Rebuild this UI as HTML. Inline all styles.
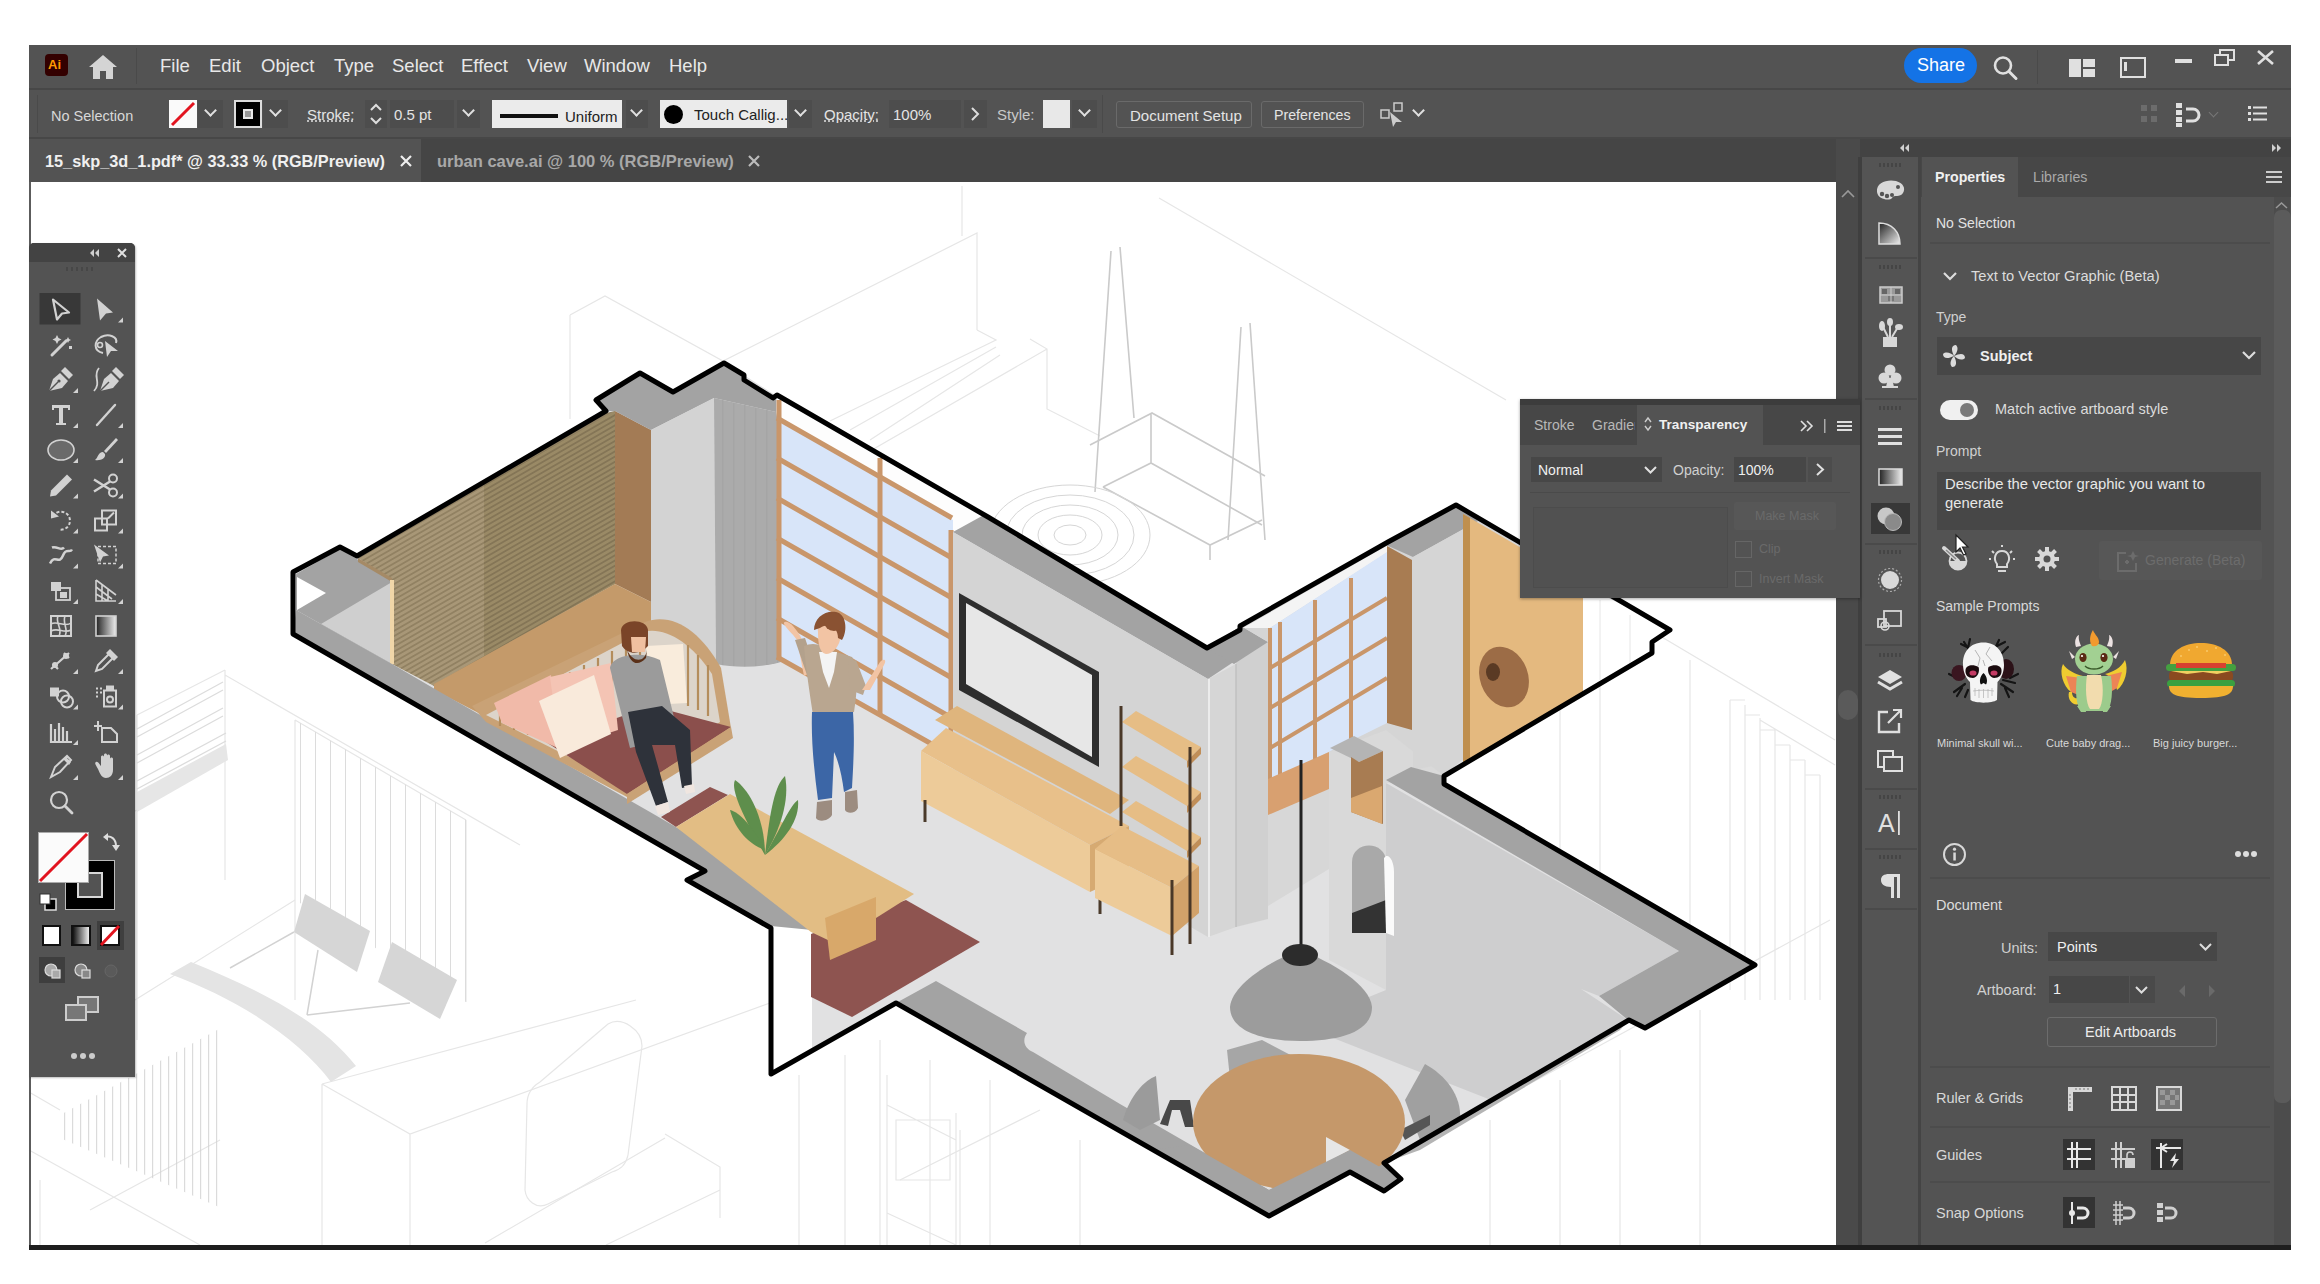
<!DOCTYPE html>
<html><head><meta charset="utf-8">
<style>
*{margin:0;padding:0;box-sizing:border-box}
html,body{width:2320px;height:1284px;overflow:hidden;background:#fff;font-family:"Liberation Sans",sans-serif}
.a{position:absolute}
.t{position:absolute;white-space:nowrap;color:#e6e6e6;line-height:1}
.m{font-size:18.5px;top:57px;color:#e8e8e8}
.c{font-size:15px;top:107px;color:#e4e4e4}
.dd{position:absolute;background:#4d4d4d}
.chev{position:absolute;width:9px;height:9px;border-right:2px solid #e0e0e0;border-bottom:2px solid #e0e0e0;transform:rotate(45deg)}
.btn{position:absolute;border:1px solid #6a6a6a;border-radius:3px;background:#535353}
svg{position:absolute;overflow:visible}
#frame{left:29px;top:45px;width:2262px;height:1205px;background:#535353}
#menubar{left:29px;top:45px;width:2262px;height:45px;background:#535353;border-bottom:2px solid #474747}
#ctrlbar{left:29px;top:90px;width:2262px;height:49px;background:#535353;border-bottom:2px solid #474747}
#tabbar{left:29px;top:139px;width:1807px;height:43px;background:#454545}
#canvas{left:29px;top:182px;width:1807px;height:1063px;background:#fff;overflow:hidden}
#vscroll{left:1836px;top:139px;width:24px;height:1106px;background:#4a4a4a}
#bottombar{left:29px;top:1245px;width:2262px;height:5px;background:#1e1e1e}
</style></head><body>
<div id="frame" class="a"></div>
<div id="menubar" class="a"></div>
<div id="ctrlbar" class="a"></div>
<div id="tabbar" class="a"></div>
<div id="canvas" class="a"></div>
<svg class="a" style="left:29px;top:182px" width="1807" height="1063" viewBox="29 182 1807 1063">
<defs>
<pattern id="slat" width="5" height="4.5" patternUnits="userSpaceOnUse" patternTransform="rotate(-30)"><rect width="5" height="4.5" fill="#a89777"/><rect y="0" width="5" height="1.8" fill="#918162"/></pattern>
<pattern id="slat2" width="5" height="4.5" patternUnits="userSpaceOnUse" patternTransform="rotate(-30)"><rect width="5" height="4.5" fill="#9a8a66"/><rect y="0" width="5" height="1.8" fill="#847556"/></pattern>
<pattern id="curt" width="11" height="10" patternUnits="userSpaceOnUse"><rect width="11" height="10" fill="#ababab"/><rect x="7" width="1.5" height="10" fill="#a5a5a5"/></pattern>
<pattern id="vsl" width="15" height="10" patternUnits="userSpaceOnUse"><rect x="0" width="1" height="10" fill="#dcdcdc"/></pattern>
<pattern id="vsl2" width="8" height="10" patternUnits="userSpaceOnUse"><rect x="0" width="1.2" height="10" fill="#d2d2d2"/></pattern>
</defs>
<!-- ===== background faint sketch ===== -->
<g fill="none" stroke="#e6e6e6" stroke-width="1.2">
<path d="M570 315 L605 296 L723 361 L977 233 V330 M570 315 V419 M962 186 V236"/>
<path d="M977 330 L996 340 L830 421 M996 347 L850 430 M1000 355 L870 440 M1030 339 L1047 349 V409 L1100 436 M1047 349 L851 462"/>
<path d="M1159 198 L1506 400"/>
<path d="M1560 680 V900 M1600 660 V880 M1650 630 L1835 740 M1690 660 V950 M1760 720 L1835 765 M1730 700 V990 M1745 705 V1000 M1760 718 V1000 M1775 730 V1000 M1790 745 V1000 M1805 760 V1000 M1820 775 V1000 M1730 700 H1745 M1745 715 H1760 M1760 730 H1775 M1775 745 H1790 M1790 760 H1805 M1805 775 H1820"/>
<path d="M137 715 L225 670 M137 715 V1040 M225 670 V880 M225 675 L520 845 M295 720 V1000 M466 820 V1002 M295 720 L466 820"/>
<path d="M40 860 L137 810 M135 1000 L295 900 M29 1092 L60 1110 M322 1084 L410 1134 L778 1000 M322 1084 L636 1000 M410 1134 V1245 M322 1084 V1245 M665 1134 L720 1167 V1218 M485 1243 L665 1138 M606 1245 L720 1190 M799 1075 V1245 M845 1055 V1245 M887 1075 V1245 M956 1113 V1245 M887 1105 L956 1140 M887 1213 L956 1245 M896 1120 H950 V1180 H896 Z"/>
<path d="M527 1104 C527 1095 530 1088 540 1082 L608 1024 C622 1016 642 1030 642 1046 L628 1155 C626 1165 620 1170 612 1172 L548 1204 C536 1210 526 1200 525 1190 Z"/>
<path d="M29 1150 L200 1245 M40 1180 V1245 M90 1210 L220 1140"/>
<path d="M880 1040 V1245 M930 1060 V1245 M990 1080 V1245 M900 1180 L1040 1110 M1080 1140 V1245 M960 1130 V1245"/>
<path d="M1500 1100 L1830 920 M1490 1120 V1245 M1560 1080 V1245 M1620 1050 V1245 M1700 1010 V1245"/>
</g>
<g fill="none" stroke="#dcdcdc" stroke-width="1.3"><path d="M137 729 L223 682 M137 737 L223 690 M137 755 L223 708 M137 763 L223 716 M137 781 L226 733 M137 789 L226 741"/></g>
<path d="M137 792 L226 744 L228 760 L137 812 Z" fill="#e6e6e6"/>
<path d="M295 720 L466 820 V1002 L295 900 Z" fill="url(#vsl)"/>
<path d="M60 1115 L219 1029 L219 1207 L60 1138 Z" fill="url(#vsl2)" opacity="0.8"/>
<g fill="none" stroke="#cacaca" stroke-width="1.6">
<path d="M1111 251 L1095 492 M1120 247 L1134 418 M1241 327 L1228 540 M1250 323 L1265 540"/>
<path d="M1090 445 L1152 413 L1265 476 M1103 487 L1151 463 L1262 525 M1151 413 V463"/>
<path d="M1103 487 L1210 545 L1262 520 M1210 545 V560"/>
</g>
<g fill="none" stroke="#d6d6d6" stroke-width="1"><ellipse cx="1070" cy="535" rx="80" ry="50"/><ellipse cx="1070" cy="535" rx="64" ry="40"/><ellipse cx="1070" cy="535" rx="48" ry="30"/><ellipse cx="1070" cy="535" rx="32" ry="20"/><ellipse cx="1070" cy="535" rx="16" ry="10"/></g>
<!-- bed -->
<path d="M170 974 L191 962 C260 990 320 1020 356 1066 L331 1082 C300 1040 240 1000 170 974 Z" fill="#e4e4e4"/>
<g fill="#d6d6d6"><path d="M305 894 L370 931 L357 972 L294 932 Z"/><path d="M392 942 L457 980 L440 1019 L378 982 Z"/></g>
<g fill="none" stroke="#d2d2d2" stroke-width="1.5"><path d="M230 968 L294 932 M307 1015 L318 950 M307 1015 L410 1003"/></g>
<!-- ===== main floor plan ===== -->
<path d="M293 572 L340 547 L357 556 L606 411 L596 400 L640 373 L673 392 L724 363 L744 375 L775 395 L988 517 L1207 648 L1241 626 L1388 542 L1456 505 L1670 630 L1652 642 L1652 653 L1444 776 L1444 784 L1755 965 L1645 1028 L1629 1020 L1384 1163 L1401 1179 L1384 1191 L1350 1172 L1269 1216 L896 1003 L771 1074 L771 928 L687 880 L705 871 L293 634 Z" fill="#e1e1e2"/>
<!-- left end -->
<path d="M296 574 L340 549 L392 580 L392 664 L296 610 Z" fill="#a3a3a3"/>
<path d="M297 577 L326 593 L297 610 Z" fill="#fff"/>
<path d="M321 624 L392 582 L392 664 Z" fill="#cfcfcf"/>
<!-- slat wall -->
<path d="M358 558 L606 413 L615 411 L615 584 L434 686 L392 664 L392 580 Z" fill="url(#slat)"/>
<path d="M484 485 L615 411 L615 584 L484 656 Z" fill="url(#slat2)"/>
<path d="M358 558 L392 578 L392 582 L358 562 Z" fill="#a58a66"/>
<path d="M390 580 L394 580 L394 664 L390 664 Z" fill="#f0d6a8"/>
<!-- brown side of alcove -->
<path d="M615 411 L651 430 L651 602 L615 584 Z" fill="#a37b55"/>
<!-- bench -->
<path d="M434 684 L615 584 L651 602 L651 640 L500 724 L434 690 Z" fill="#c49a6a"/>
<!-- grey strip left room bottom -->
<path d="M296 610 L392 664 L440 692 L650 812 L705 844 L811 908 L811 932 L771 928 L687 880 L705 871 L293 634 Z" fill="#a3a3a3"/>
<!-- pillar cap -->
<path d="M606 411 L596 400 L640 373 L673 392 L724 363 L744 375 L744 380 L776 396 L776 412 L714 398 L651 430 L615 411 Z" fill="#a3a3a3"/>
<path d="M651 430 L714 398 L716 664 L651 632 Z" fill="#d3d3d3"/>
<path d="M714 398 L776 412 L780 432 L781 662 C760 668 735 668 716 664 Z" fill="url(#curt)"/>
<!-- window wall left -->
<path d="M777 400 L988 517 L953 534 L953 755 L777 658 Z" fill="#d8e5f9"/>
<path d="M777 398 L988 516 L953 532 L953 520 L777 420 Z" fill="#fdfdfd"/>
<g fill="none" stroke="#c9966a" stroke-width="5">
<path d="M779 400 V660 M880 458 V714 M951 530 V755"/>
<path d="M777 418 L952 518 M777 458 L952 558 M777 498 L952 598 M777 538 L952 638 M777 578 L952 678 M777 618 L952 718 M777 657 L953 756"/>
</g>
<!-- TV wall -->
<path d="M953 532 L982 516 L1207 648 L1241 626 L1241 657 L1208 679 Z" fill="#a3a3a3"/>
<path d="M953 532 L1208 679 L1208 937 L953 790 Z" fill="#d4d4d4"/>
<path d="M1208 679 L1236 664 L1236 927 L1208 937 Z" fill="#d6d6d6"/>
<path d="M1209 679 V937" stroke="#ececec" stroke-width="2"/>
<path d="M1236 644 L1268 640 L1268 919 L1236 927 Z" fill="#d0d0d0"/>
<path d="M1236 664 V927" stroke="#c0c0c0" stroke-width="1.5"/>
<!-- TV -->
<path d="M959 593 L1099 672 L1099 767 L959 690 Z" fill="#2e2e2e"/>
<path d="M966 603 L1092 675 L1092 757 L966 684 Z" fill="#e7e7e7"/>
<!-- sideboard -->
<path d="M935 720 L957 706 L1129 800 L1110 814 Z" fill="#dfb57d"/>
<path d="M921 751 L946 728 L1129 826 L1090 845 Z" fill="#e8c08a"/>
<path d="M921 751 L1090 845 L1090 892 L921 801 Z" fill="#edcb99"/>
<path d="M1090 845 L1129 826 L1129 874 L1090 892 Z" fill="#d6aa72"/>
<path d="M925 800 V822 M1100 892 V914" stroke="#4a3a2a" stroke-width="3"/>
<path d="M1095 849 L1122 826 L1199 866 L1172 888 Z" fill="#e6bd86"/>
<path d="M1095 849 L1172 888 L1172 936 L1095 898 Z" fill="#edcb99"/>
<path d="M1172 888 L1199 866 L1199 913 L1172 936 Z" fill="#d2a26a"/>
<g fill="#e6bd85"><path d="M1122 722 L1136 711 L1201 747 L1187 761 Z"/><path d="M1122 767 L1136 756 L1201 792 L1187 806 Z"/><path d="M1122 812 L1136 801 L1201 837 L1187 851 Z"/></g>
<g fill="#c08e58"><path d="M1187 761 L1201 747 L1201 754 L1187 768 Z"/><path d="M1187 806 L1201 792 L1201 799 L1187 813 Z"/><path d="M1187 851 L1201 837 L1201 844 L1187 858 Z"/></g>
<path d="M1121 706 V826 M1190 747 V944 M1172 880 V955" stroke="#4a3828" stroke-width="3"/>
<!-- right room walls -->
<path d="M1207 648 L1241 626 L1268 642 L1234 664 Z" fill="#a3a3a3"/>
<path d="M1241 626 L1388 542 L1456 505 L1620 600 L1584 690 L1462 760 L1444 776 L1330 752 L1268 780 L1268 642 Z" fill="#d5d5d5"/>
<path d="M1268 780 L1329 752 L1329 869 L1268 906 Z" fill="#d7d7d7"/>
<path d="M1329 752 L1386 730 L1444 776 L1444 784 L1386 783 L1386 990 L1329 960 Z" fill="#d9d9d9"/>
<!-- right window -->
<path d="M1243 628 L1388 545 L1388 552 L1270 628 Z" fill="#f4f4f4"/>
<path d="M1270 628 L1387 552 L1387 723 L1270 781 Z" fill="#d8e5f9"/>
<g fill="none" stroke="#c9966a" stroke-width="4">
<path d="M1270 628 V800 M1280 622 V790 M1315 600 V775 M1351 578 V757"/>
<path d="M1270 668 L1387 598 M1270 708 L1387 638 M1270 748 L1387 678"/>
</g>
<path d="M1268 779 L1329 752 L1329 789 L1268 815 Z" fill="#d8a070"/>
<path d="M1387 546 L1412 560 L1412 730 L1387 723 Z" fill="#a87c52"/>
<path d="M1330 748 L1354 736 L1383 751 L1359 762 Z" fill="#b4b4b4"/>
<path d="M1351 757 L1359 762 L1383 751 L1383 824 L1351 812 Z" fill="#a87c52"/>
<path d="M1351 798 L1382 786 L1382 824 L1351 812 Z" fill="#daa870"/>
<path d="M1386 545 L1456 504 L1478 521 L1413 557 Z" fill="#a3a3a3"/>
<path d="M1413 557 L1478 521 L1463 529 L1463 760 L1413 770 Z" fill="#d5d5d5"/>
<!-- wood panel -->
<path d="M1463 514 L1583 584 L1583 694 L1463 764 Z" fill="#e4b97f"/>
<path d="M1463 514 L1470 518 L1470 760 L1463 764 Z" fill="#bf8f4e"/>
<ellipse cx="1504" cy="677" rx="24" ry="31" transform="rotate(-20 1504 677)" fill="#9c6c46"/>
<ellipse cx="1493" cy="672" rx="7" ry="9" fill="#5a3a24"/>
<path d="M1583 585 L1672 630 L1652 642 L1652 653 L1583 694 Z" fill="#fff"/>
<path d="M1600 600 V680 M1630 615 V665" stroke="#e6e6e6" stroke-width="1"/>
<!-- right room big face -->
<path d="M1386 783 L1679 951 L1599 996 L1581 989 L1628 1020 L1491 1100 L1300 1025 L1386 990 Z" fill="#cececf"/>
<path d="M1386 780 L1411 767 L1444 776 L1444 784 L1755 965 L1645 1029 L1628 1020 L1599 996 L1679 951 Z" fill="#a3a3a3"/>
<!-- arch niche -->
<path d="M1352 933 V862 C1352 840 1386 840 1386 862 V933 Z" fill="#a9a9a9"/>
<path d="M1352 913 L1386 900 V933 L1352 933 Z" fill="#333"/>
<path d="M1384 858 C1388 852 1394 860 1394 872 V936 L1386 933 Z" fill="#fafafa"/>
<!-- bottom grey strip -->
<path d="M896 1003 L936 981 L1027 1033 C1022 1040 1024 1048 1033 1052 L1120 1104 L1269 1190 L1350 1150 L1384 1163 L1401 1179 L1384 1191 L1350 1172 L1269 1216 Z" fill="#a3a3a3"/>
<path d="M1384 1163 L1491 1100 L1629 1020 L1620 1030 L1420 1150 Z" fill="#b4b4b4"/>
<!-- chairs -->
<path d="M1227 1050 L1262 1040 L1300 1060 L1290 1095 L1232 1098 Z" fill="#a6a6a6"/>
<path d="M1123 1120 C1130 1095 1145 1080 1156 1076 L1160 1120 L1140 1130 Z" fill="#9b9b9b"/>
<path d="M1160 1124 L1170 1100 L1190 1100 L1194 1127 L1185 1127 L1180 1110 L1172 1110 L1168 1126 Z" fill="#484848"/>
<path d="M1425 1064 C1445 1075 1462 1095 1460 1120 L1420 1140 L1405 1100 Z" fill="#a0a0a0"/>
<path d="M1400 1130 L1430 1115 L1430 1125 L1405 1140 Z" fill="#555"/>
<!-- round table -->
<clipPath id="flc"><path d="M896 1003 L1269 1216 L1350 1172 L1384 1191 L1401 1179 L1384 1163 L1629 1020 L1600 900 L1100 900 Z"/></clipPath>
<ellipse cx="1299" cy="1122" rx="106" ry="68" fill="#c5986a" clip-path="url(#flc)"/>
<path d="M1326 1137 L1350 1150 L1326 1163 Z" fill="#e6e6e6"/>
<path d="M1190 1145 L1269 1190 L1350 1150 L1401 1179 L1384 1191 L1350 1172 L1269 1216 L1150 1150 Z" fill="#a3a3a3"/>
<!-- lamp -->
<path d="M1301 760 V947" stroke="#222" stroke-width="3"/>
<path d="M1300 950 C1268 962 1232 985 1230 1007 C1230 1032 1265 1041 1300 1041 C1340 1041 1372 1032 1372 1007 C1370 985 1332 962 1300 950 Z" fill="#9c9c9c"/>
<ellipse cx="1300" cy="955" rx="18" ry="11" fill="#2c2c2c"/>
<!-- coffee table area -->
<path d="M771 926 L812 930 L812 1052 L771 1076 Z" fill="#fff"/>
<path d="M811 934 L906 900 L980 942 L852 1017 L811 997 Z" fill="#8e5450"/>
<path d="M661 817 L710 787 L728 795 L676 827 Z" fill="#8e5450"/>
<path d="M676 827 L730 794 L914 894 L876 918 L830 941 L811 932 Z" fill="#e2bd84"/>
<path d="M825 918 L876 897 L876 940 L830 960 Z" fill="#d8a86a"/>
<g fill="#5e8e4c"><path d="M765 855 C745 820 730 790 735 780 C750 790 765 820 765 855Z"/><path d="M765 855 C770 810 775 785 785 776 C790 800 780 830 765 855Z"/><path d="M765 855 C780 830 790 805 798 800 C800 820 785 840 765 855Z"/><path d="M765 850 C755 830 740 812 730 810 C735 830 750 845 765 850Z"/></g>
<!-- sofa -->
<path d="M472 706 L645 622 C672 612 700 630 721 668 L731 728 L627 797 L486 722 Z" fill="#c9a276"/>
<path d="M486 715 L643 632 C662 626 690 640 712 674 L720 722 L625 785 Z" fill="#dcd4ca"/>
<g stroke="#b48d5c" stroke-width="2.2"><path d="M500 708 V726 M514 700 V730 M528 693 V735 M542 686 V740 M556 679 V745 M570 672 V748 M584 665 V745 M598 658 V740 M612 651 V735 M626 644 V730 M640 637 V725 M688 645 V706 M698 655 V710 M708 665 V716"/></g>
<path d="M546 742 L652 706 L731 727 L627 794 Z" fill="#8b4f4c"/>
<path d="M627 794 L731 727 L733 738 L627 804 Z" fill="#c9a276"/>
<path d="M494 703 L551 675 L560 749 L502 723 Z" fill="#f1baa9"/>
<path d="M550 677 L611 663 L618 730 L560 749 Z" fill="#f4c4b4"/>
<path d="M539 701 L594 675 L611 734 L560 758 Z" fill="#f9eadb"/>
<path d="M646 646 L683 644 L687 703 L651 705 Z" fill="#f9ecdc"/>
<!-- man -->
<path d="M610 668 C612 655 640 650 660 660 L680 742 L655 742 L630 748 Z" fill="#9b9b9b"/>
<path d="M628 712 L662 706 L690 730 L692 786 L682 788 L675 745 L652 745 L668 802 L656 806 L636 752 Z" fill="#2e323a"/>
<path d="M621 630 C622 619 646 618 648 630 L648 646 C640 655 628 655 622 646 Z" fill="#7a4428"/>
<path d="M631 637 L646 637 L645 652 L632 652 Z" fill="#f0c0a0"/>
<path d="M627 650 C633 663 645 663 647 650 L646 658 C638 667 630 664 627 650Z" fill="#5a3018"/>
<path d="M655 806 L668 802 L670 812 L658 815 Z M684 786 L694 784 L695 792 L686 794 Z" fill="#f0e6e0"/>
<!-- woman -->
<path d="M797 640 C792 633 786 628 784 624 C783 620 790 622 793 626 C796 630 800 634 802 640 L812 672 L804 676 Z" fill="#f2c4a4"/>
<path d="M795 640 L805 638 L815 668 L808 678 Z" fill="#b3a18c"/>
<path d="M804 646 C812 642 822 644 830 650 L852 657 C858 664 858 690 854 712 L813 715 C810 695 806 670 804 646 Z" fill="#b9a690"/>
<path d="M819 652 L837 652 L834 672 L829 688 L823 672 Z" fill="#f4f4f4"/>
<path d="M848 662 L856 660 L866 686 L863 695 L850 690 Z" fill="#b9a690"/>
<path d="M862 690 L866 684 L880 662 C884 658 887 660 884 665 L870 690 Z" fill="#f2c4a4"/>
<path d="M818 632 C816 622 823 614 832 615 C840 616 844 626 840 640 C838 648 832 654 826 654 C820 653 818 645 818 632 Z" fill="#f2c4a4"/>
<path d="M814 630 C814 618 825 610 836 612 C846 614 848 630 842 640 L838 638 C838 628 830 622 820 628 Z" fill="#8a5232"/>
<ellipse cx="834" cy="622" rx="10" ry="9" fill="#8a5232"/>
<path d="M812 712 L853 712 C855 740 853 770 852 788 L844 792 C842 775 838 760 834 752 L832 798 L818 800 C814 770 811 740 812 712 Z" fill="#3c66a6"/>
<path d="M817 802 L832 800 L832 815 C828 822 818 822 816 818 Z M845 792 L857 790 L858 808 C855 814 847 814 845 810 Z" fill="#9c8c80"/>
<!-- main outline -->
<path d="M293 572 L340 547 L357 556 L606 411 L596 400 L640 373 L673 392 L724 363 L744 375 L744 380 L773 398 L777 395 L988 517 L1207 648 L1240 630 L1240 626 L1388 542 L1456 505 L1670 630 L1652 642 L1652 653 L1444 776 L1444 784 L1755 965 L1645 1028 L1629 1020 L1384 1163 L1401 1179 L1384 1191 L1350 1172 L1269 1216 L896 1003 L771 1074 L771 928 L687 880 L705 871 L293 634 Z" fill="none" stroke="#000" stroke-width="5" stroke-linejoin="round"/>
</svg>

<div id="vscroll" class="a"></div>
<div id="bottombar" class="a"></div>

<!-- MENU BAR -->
<div class="a" style="left:45px;top:54px;width:23px;height:22px;background:#330000;border-radius:4px"></div>
<div class="t" style="left:48px;top:58px;font-size:13px;font-weight:700;color:#ff9a00">Ai</div>
<svg style="left:88px;top:54px" width="30" height="26" viewBox="0 0 30 26"><path d="M15 1 L29 13 L25 13 L25 25 L18 25 L18 17 L12 17 L12 25 L5 25 L5 13 L1 13 Z" fill="#d4d4d4"/></svg>
<div class="a" style="left:136px;top:48px;width:1px;height:36px;background:#4a4a4a"></div>
<div class="t m" style="left:160px">File</div>
<div class="t m" style="left:209px">Edit</div>
<div class="t m" style="left:261px">Object</div>
<div class="t m" style="left:334px">Type</div>
<div class="t m" style="left:392px">Select</div>
<div class="t m" style="left:461px">Effect</div>
<div class="t m" style="left:527px">View</div>
<div class="t m" style="left:584px">Window</div>
<div class="t m" style="left:669px">Help</div>
<div class="a" style="left:1904px;top:48px;width:73px;height:35px;background:#1473e6;border-radius:18px"></div>
<div class="t" style="left:1917px;top:56px;font-size:18px;color:#fff">Share</div>
<svg style="left:1993px;top:56px" width="26" height="24" viewBox="0 0 26 24"><circle cx="10" cy="9.5" r="8" fill="none" stroke="#e0e0e0" stroke-width="2.6"/><path d="M16 15.5 L23 22.5" stroke="#e0e0e0" stroke-width="3" stroke-linecap="round"/></svg>
<div class="a" style="left:2037px;top:50px;width:1px;height:34px;background:#4a4a4a"></div>
<svg style="left:2069px;top:59px" width="26" height="18" viewBox="0 0 26 18"><rect x="0" y="0" width="12" height="18" fill="#e0e0e0"/><rect x="14" y="0" width="12" height="8" fill="#e0e0e0"/><rect x="14" y="10" width="12" height="8" fill="#e0e0e0"/></svg>
<svg style="left:2120px;top:57px" width="26" height="21" viewBox="0 0 26 21"><rect x="1" y="1" width="24" height="19" fill="none" stroke="#e0e0e0" stroke-width="2"/><rect x="4" y="5" width="3" height="9" fill="#e0e0e0"/></svg>
<div class="a" style="left:2175px;top:59px;width:17px;height:4px;background:#e0e0e0"></div>
<svg style="left:2214px;top:49px" width="22" height="17" viewBox="0 0 22 17"><rect x="1" y="6" width="13" height="10" fill="none" stroke="#e0e0e0" stroke-width="2"/><path d="M6 6 V1 H20 V11 H14" fill="none" stroke="#e0e0e0" stroke-width="2"/></svg>
<svg style="left:2257px;top:50px" width="17" height="15" viewBox="0 0 17 15"><path d="M1 1 L16 14 M16 1 L1 14" stroke="#e0e0e0" stroke-width="2.6"/></svg>

<!-- CONTROL BAR -->
<div class="a" style="left:37px;top:95px;width:1px;height:38px;background:#4a4a4a"></div>
<div class="t c" style="left:51px;top:109px;font-size:14.5px;color:#d8d8d8">No Selection</div>
<div class="a" style="left:169px;top:100px;width:28px;height:28px;background:#fafafa"></div>
<svg style="left:169px;top:100px" width="28" height="28"><path d="M3 25 L25 3" stroke="#e2141f" stroke-width="3"/></svg>
<div class="dd" style="left:198px;top:100px;width:25px;height:28px"></div>
<div class="chev" style="left:206px;top:106px"></div>
<div class="a" style="left:234px;top:100px;width:28px;height:28px;background:#000;border:2px solid #ddd"></div>
<div class="a" style="left:243px;top:109px;width:10px;height:10px;border:2px solid #e8e8e8;background:#999"></div>
<div class="dd" style="left:263px;top:100px;width:25px;height:28px"></div>
<div class="chev" style="left:271px;top:106px"></div>
<div class="t c" style="left:307px;text-decoration:underline dotted">Stroke:</div>
<div class="dd" style="left:365px;top:100px;width:22px;height:28px"></div>
<svg style="left:369px;top:103px" width="14" height="22"><path d="M2 7 L7 2 L12 7 M2 15 L7 20 L12 15" fill="none" stroke="#ddd" stroke-width="2"/></svg>
<div class="dd" style="left:390px;top:100px;width:64px;height:28px"></div>
<div class="t c" style="left:394px">0.5 pt</div>
<div class="dd" style="left:457px;top:100px;width:23px;height:28px"></div>
<div class="chev" style="left:464px;top:106px"></div>
<div class="a" style="left:492px;top:100px;width:130px;height:28px;background:#ebebeb"></div>
<div class="a" style="left:500px;top:114px;width:58px;height:4px;background:#111"></div>
<div class="t c" style="left:565px;top:109px;color:#222">Uniform</div>
<div class="dd" style="left:626px;top:100px;width:22px;height:28px"></div>
<div class="chev" style="left:632px;top:106px"></div>
<div class="a" style="left:660px;top:100px;width:127px;height:28px;background:#ebebeb"></div>
<div class="a" style="left:664px;top:105px;width:19px;height:19px;border-radius:50%;background:#000"></div>
<div class="t c" style="left:694px;top:107px;color:#222">Touch Callig...</div>
<div class="dd" style="left:789px;top:100px;width:23px;height:28px"></div>
<div class="chev" style="left:796px;top:106px"></div>
<div class="t c" style="left:824px;text-decoration:underline dotted">Opacity:</div>
<div class="dd" style="left:889px;top:100px;width:72px;height:28px"></div>
<div class="t c" style="left:893px">100%</div>
<div class="dd" style="left:964px;top:100px;width:23px;height:28px"></div>
<svg style="left:969px;top:107px" width="12" height="14"><path d="M3 1 L9 7 L3 13" fill="none" stroke="#ddd" stroke-width="2"/></svg>
<div class="t c" style="left:997px;color:#c8c8c8">Style:</div>
<div class="a" style="left:1043px;top:100px;width:27px;height:28px;background:#e8e8e8"></div>
<div class="dd" style="left:1072px;top:100px;width:25px;height:28px"></div>
<div class="chev" style="left:1080px;top:106px"></div>
<div class="a" style="left:1102px;top:95px;width:1px;height:38px;background:#4a4a4a"></div>
<div class="btn" style="left:1116px;top:101px;width:136px;height:27px"></div>
<div class="t c" style="left:1130px;top:108px">Document Setup</div>
<div class="btn" style="left:1261px;top:101px;width:103px;height:27px"></div>
<div class="t c" style="left:1274px;top:108px;font-size:14.2px">Preferences</div>
<svg style="left:1380px;top:102px" width="28" height="26"><rect x="1" y="8" width="8" height="8" fill="none" stroke="#ccc" stroke-width="1.5"/><rect x="14" y="1" width="8" height="8" fill="none" stroke="#ccc" stroke-width="1.5"/><path d="M10 10 L22 20 L16 20 L13 25 Z" fill="#ccc"/></svg>
<div class="chev" style="left:1414px;top:106px"></div>
<svg style="left:2141px;top:105px" width="17" height="18"><g fill="#6c6c6c"><rect x="0" y="0" width="6" height="6"/><rect x="10" y="0" width="6" height="6"/><rect x="0" y="11" width="6" height="6"/><rect x="10" y="11" width="6" height="6"/></g></svg>
<svg style="left:2176px;top:103px" width="26" height="24"><g fill="#e0e0e0"><rect x="0" y="0" width="6" height="5"/><rect x="0" y="7" width="6" height="5"/><rect x="0" y="14" width="6" height="5"/><rect x="0" y="20" width="6" height="4"/></g><path d="M10 6 H17 A6 6 0 0 1 17 18 H10" fill="none" stroke="#e0e0e0" stroke-width="3"/></svg>
<div class="chev" style="left:2210px;top:109px;width:7px;height:7px;border-color:#777;border-width:1.5px"></div>
<svg style="left:2248px;top:106px" width="20" height="16"><g fill="#e0e0e0"><rect x="0" y="0" width="3" height="3"/><rect x="0" y="6" width="3" height="3"/><rect x="0" y="12" width="3" height="3"/><rect x="5" y="0.5" width="14" height="2"/><rect x="5" y="6.5" width="14" height="2"/><rect x="5" y="12.5" width="14" height="2"/></g></svg>

<!-- TAB BAR -->
<div class="a" style="left:29px;top:139px;width:392px;height:43px;background:#535353"></div>
<div class="t" style="left:45px;top:153px;font-size:16.3px;font-weight:700;color:#f0f0f0">15_skp_3d_1.pdf* @ 33.33 % (RGB/Preview)</div>
<svg style="left:400px;top:155px" width="12" height="12"><path d="M1 1 L11 11 M11 1 L1 11" stroke="#eee" stroke-width="2.2"/></svg>
<div class="t" style="left:437px;top:153px;font-size:16.5px;font-weight:700;color:#a8a8a8">urban cave.ai @ 100 % (RGB/Preview)</div>
<svg style="left:748px;top:155px" width="12" height="12"><path d="M1 1 L11 11 M11 1 L1 11" stroke="#bbb" stroke-width="2.2"/></svg>

<!-- LEFT TOOLBAR -->
<div class="a" style="left:29px;top:182px;width:2px;height:1063px;background:#5c5c5c"></div>
<div class="a" style="left:29px;top:243px;width:106px;height:834px;background:#535353;box-shadow:1px 1px 2px rgba(0,0,0,.25);border-radius:5px 5px 0 0"></div>
<div class="a" style="left:29px;top:243px;width:106px;height:19px;background:#434343;border-radius:5px 5px 0 0"></div>
<svg class="a" style="left:90px;top:248px" width="40" height="10"><path d="M4 1 L0 5 L4 9 Z M9 1 L5 5 L9 9 Z" fill="#cfcfcf"/><path d="M28 1 L36 9 M36 1 L28 9" stroke="#e0e0e0" stroke-width="2"/></svg>
<svg class="a" style="left:66px;top:267px" width="30" height="5"><g fill="#474747"><rect x="0" y="0" width="2" height="4"/><rect x="5" y="0" width="2" height="4"/><rect x="10" y="0" width="2" height="4"/><rect x="15" y="0" width="2" height="4"/><rect x="20" y="0" width="2" height="4"/><rect x="25" y="0" width="2" height="4"/></g></svg>
<svg class="a" style="left:0;top:0" width="140" height="820"><rect x="39.5" y="293" width="41" height="31.5" fill="#383838"/><g transform="translate(61,309.5)"><path d="M-8 -10 L8 3 L1 4 L-4 10 Z" fill="none" stroke="#d2d2d2" stroke-width="2.2" stroke-linejoin="round"/></g><g transform="translate(106,309.5)"><path d="M-9 -11 L7 3 L0 4 L-6 11 Z" fill="#d2d2d2"/></g><path d="M118 322.5 L123 317.5 L123 322.5 Z" fill="#d2d2d2"/><g transform="translate(61,345)"><path d="M-9 10 L5 -4" stroke="#d2d2d2" stroke-width="3" stroke-linecap="round"/><path d="M-4 -10 l1.5 3 3 1.5 -3 1.5 -1.5 3 -1.5 -3 -3 -1.5 3 -1.5z M7 -8 l1 2 2 1 -2 1 -1 2 -1 -2 -2 -1 2 -1z" fill="#d2d2d2"/><rect x="8" y="1" width="3" height="3" fill="#d2d2d2"/></g><g transform="translate(106,345)"><path d="M-3 8 C-13 6 -12 -4 -5 -8 C3 -12 12 -8 10 -2" fill="none" stroke="#d2d2d2" stroke-width="2"/><circle cx="-6" cy="0" r="2.5" fill="none" stroke="#d2d2d2" stroke-width="1.6"/><path d="M-1 -4 L12 6 L5 6 L1 12 Z" fill="#d2d2d2"/></g><g transform="translate(61,380)"><path d="M-12 11 L-8 -1 L-1 -7 L7 1 L1 8 Z" fill="#d2d2d2"/><path d="M0 -9 L4 -13 L12 -5 L8 -1 Z" fill="#d2d2d2"/><path d="M-12 11 L-3 2" stroke="#535353" stroke-width="1.4"/><circle cx="-2" cy="1" r="1.6" fill="#535353"/></g><path d="M73 393 L78 388 L78 393 Z" fill="#d2d2d2"/><g transform="translate(106,380)"><path d="M-6 11 L-2 -1 L5 -7 L13 1 L7 8 Z" fill="#d2d2d2"/><path d="M6 -9 L10 -13 L18 -5 L14 -1 Z" fill="#d2d2d2"/><path d="M-6 11 L3 2" stroke="#535353" stroke-width="1.4"/><path d="M-7 -12 C-14 -4 -4 2 -12 11" fill="none" stroke="#d2d2d2" stroke-width="1.8"/></g><g transform="translate(61,415)"><path d="M-9 -10 H9 V-5 H7 V-7 H2 V8 H5 V10 H-5 V8 H-2 V-7 H-7 V-5 H-9 Z" fill="#d2d2d2"/></g><path d="M73 428 L78 423 L78 428 Z" fill="#d2d2d2"/><g transform="translate(106,415)"><path d="M-9 10 L9 -10" stroke="#d2d2d2" stroke-width="2.4" stroke-linecap="round"/></g><path d="M118 428 L123 423 L123 428 Z" fill="#d2d2d2"/><g transform="translate(61,450)"><ellipse cx="0" cy="0" rx="13" ry="10" fill="#6a6a6a" stroke="#d2d2d2" stroke-width="1.6"/></g><path d="M73 463 L78 458 L78 463 Z" fill="#d2d2d2"/><g transform="translate(106,450)"><path d="M10 -12 L12 -10 L0 3 L-2 1 Z" fill="#d2d2d2"/><path d="M-3 2 C-8 2 -8 8 -11 10 C-5 11 0 8 -1 4 Z" fill="#d2d2d2"/></g><path d="M118 463 L123 458 L123 463 Z" fill="#d2d2d2"/><g transform="translate(61,485.5)"><path d="M6 -11 L11 -6 L-5 10 L-11 11 L-10 5 Z" fill="#d2d2d2"/></g><path d="M73 498.5 L78 493.5 L78 498.5 Z" fill="#d2d2d2"/><g transform="translate(106,485.5)"><circle cx="7" cy="-7" r="4" fill="none" stroke="#d2d2d2" stroke-width="2"/><circle cx="7" cy="7" r="4" fill="none" stroke="#d2d2d2" stroke-width="2"/><path d="M-12 -6 L4 4 M-12 6 L4 -4" stroke="#d2d2d2" stroke-width="2.5"/></g><path d="M118 498.5 L123 493.5 L123 498.5 Z" fill="#d2d2d2"/><g transform="translate(61,520.5)"><path d="M-8 -4 A9 9 0 1 1 -2 9" fill="none" stroke="#d2d2d2" stroke-width="2" stroke-dasharray="3 2"/><path d="M-10 -10 L-10 -2 L-2 -4 Z" fill="#d2d2d2"/></g><path d="M73 533.5 L78 528.5 L78 533.5 Z" fill="#d2d2d2"/><g transform="translate(106,520.5)"><rect x="-11" y="-2" width="12" height="12" fill="none" stroke="#d2d2d2" stroke-width="2"/><rect x="-4" y="-10" width="14" height="14" fill="none" stroke="#d2d2d2" stroke-width="2"/><path d="M2 -2 L8 -8" stroke="#d2d2d2" stroke-width="2"/></g><path d="M118 533.5 L123 528.5 L123 533.5 Z" fill="#d2d2d2"/><g transform="translate(61,555.5)"><path d="M-11 8 C-6 -2 -2 10 2 0 C5 -8 9 -2 11 -6 M-9 -8 C-4 -10 0 -4 3 -8" fill="none" stroke="#d2d2d2" stroke-width="2.5"/></g><path d="M73 568.5 L78 563.5 L78 568.5 Z" fill="#d2d2d2"/><g transform="translate(106,555.5)"><rect x="-8" y="-9" width="18" height="17" fill="none" stroke="#d2d2d2" stroke-width="1.5" stroke-dasharray="3 2"/><path d="M-12 -11 L3 0 L-3 1 L-6 7 Z" fill="#d2d2d2"/></g><path d="M118 568.5 L123 563.5 L123 568.5 Z" fill="#d2d2d2"/><g transform="translate(61,591)"><rect x="-5" y="-3" width="14" height="12" fill="none" stroke="#d2d2d2" stroke-width="1.8"/><rect x="-10" y="-9" width="10" height="9" fill="#d2d2d2"/><rect x="-1" y="1" width="7" height="6" fill="#d2d2d2"/></g><path d="M73 604 L78 599 L78 604 Z" fill="#d2d2d2"/><g transform="translate(106,591)"><path d="M-10 -11 V10 H10 M-10 -11 L10 4 M-10 -4 L6 8 M-10 3 L2 10 M-4 -7 V10 M2 -2 V10" fill="none" stroke="#d2d2d2" stroke-width="1.6"/></g><path d="M118 604 L123 599 L123 604 Z" fill="#d2d2d2"/><g transform="translate(61,626)"><rect x="-10" y="-10" width="20" height="20" fill="none" stroke="#d2d2d2" stroke-width="2"/><path d="M-10 -2 C-4 -6 4 2 10 -3 M-10 5 C-3 1 3 8 10 4 M-3 -10 C-6 -3 2 3 -2 10 M4 -10 C1 -2 8 3 4 10" fill="none" stroke="#d2d2d2" stroke-width="1.6"/></g><defs><linearGradient id="gr1" x1="0" x2="1"><stop offset="0" stop-color="#222"/><stop offset="1" stop-color="#eee"/></linearGradient></defs><g transform="translate(106,626)"><rect x="-10" y="-10" width="20" height="20" fill="url(#gr1)" stroke="#d2d2d2" stroke-width="1.6"/></g><g transform="translate(61,661)"><path d="M-10 8 L8 -8 M-8 3 L-3 8 M3 -8 L8 -3" stroke="#d2d2d2" stroke-width="2.2"/><circle cx="-6" cy="4" r="3" fill="#d2d2d2"/><circle cx="5" cy="-5" r="3" fill="#d2d2d2"/></g><path d="M73 674 L78 669 L78 674 Z" fill="#d2d2d2"/><g transform="translate(106,661)"><path d="M-10 10 L-8 4 L4 -8 L8 -4 L-4 8 Z" fill="none" stroke="#d2d2d2" stroke-width="2"/><path d="M4 -12 L12 -4 L8 0 L0 -8 Z" fill="#d2d2d2"/></g><path d="M118 674 L123 669 L123 674 Z" fill="#d2d2d2"/><g transform="translate(61,696.5)"><rect x="-11" y="-9" width="9" height="9" fill="#d2d2d2"/><circle cx="2" cy="0" r="6" fill="none" stroke="#d2d2d2" stroke-width="2"/><circle cx="6" cy="5" r="6" fill="none" stroke="#d2d2d2" stroke-width="2"/></g><path d="M73 709.5 L78 704.5 L78 709.5 Z" fill="#d2d2d2"/><g transform="translate(106,696.5)"><path d="M-10 -8 h2 M-6 -8 h2 M-10 -4 h2 M-6 -4 h2 M-10 0 h2" stroke="#d2d2d2" stroke-width="2"/><rect x="-2" y="-6" width="12" height="16" fill="none" stroke="#d2d2d2" stroke-width="2"/><rect x="0" y="-11" width="8" height="5" fill="#d2d2d2"/><circle cx="4" cy="3" r="3" fill="none" stroke="#d2d2d2" stroke-width="2"/></g><path d="M118 709.5 L123 704.5 L123 709.5 Z" fill="#d2d2d2"/><g transform="translate(61,732)"><path d="M-10 -8 V10 H11 M-6 10 V-3 M-2 10 V-9 M2 10 V-5 M6 10 V-1" fill="none" stroke="#d2d2d2" stroke-width="2.2"/></g><path d="M73 745 L78 740 L78 745 Z" fill="#d2d2d2"/><g transform="translate(106,732)"><path d="M-12 -6 H-4 M-8 -11 V-1" stroke="#d2d2d2" stroke-width="2"/><path d="M-4 -4 H5 L11 2 V10 H-4 Z" fill="none" stroke="#d2d2d2" stroke-width="2"/></g><g transform="translate(61,767)"><path d="M-10 10 L-6 0 L6 -11 L10 -7 L-1 5 Z" fill="none" stroke="#d2d2d2" stroke-width="2"/><path d="M2 -8 L8 -2 L10 -5 L5 -10 Z" fill="#d2d2d2"/></g><path d="M73 780 L78 775 L78 780 Z" fill="#d2d2d2"/><g transform="translate(106,767)"><path d="M-8 2 C-10 -2 -12 -4 -10 -5 C-8 -6 -6 -2 -5 -1 V-10 C-5 -12 -2 -12 -2 -10 V-3 V-12 C-2 -14 1 -14 1 -12 V-3 V-11 C1 -13 4 -13 4 -11 V-2 V-8 C4 -10 7 -10 7 -8 V3 C7 8 4 11 0 11 C-4 11 -6 7 -8 2 Z" fill="#d2d2d2"/></g><path d="M118 780 L123 775 L123 780 Z" fill="#d2d2d2"/><g transform="translate(61,802)"><circle cx="-2" cy="-2" r="8" fill="none" stroke="#d2d2d2" stroke-width="2.2"/><path d="M4 4 L11 11" stroke="#d2d2d2" stroke-width="2.8" stroke-linecap="round"/></g></svg>
<!-- colour swatches -->
<div class="a" style="left:65px;top:860px;width:50px;height:50px;background:#000;border:1px solid #bbb"></div>
<div class="a" style="left:77px;top:872px;width:26px;height:26px;background:#535353;border:2px solid #d8d8d8"></div>
<div class="a" style="left:38px;top:832px;width:51px;height:51px;background:#fbfbfb;border:1px solid #aaa"></div>
<svg class="a" style="left:38px;top:832px" width="51" height="51"><path d="M2 49 L49 2" stroke="#e2141f" stroke-width="3"/></svg>
<svg class="a" style="left:102px;top:833px" width="20" height="20"><path d="M3 4 C9 2 14 6 14 13" fill="none" stroke="#ddd" stroke-width="2"/><path d="M1 4 L6 0 L6 8 Z M10 12 L18 12 L14 18 Z" fill="#ddd"/></svg>
<svg class="a" style="left:39px;top:893px" width="18" height="18"><rect x="6" y="6" width="11" height="11" fill="#000" stroke="#ddd" stroke-width="1.5"/><rect x="1" y="1" width="10" height="10" fill="#fff" stroke="#333" stroke-width="1"/></svg>
<div class="a" style="left:42px;top:925px;width:19px;height:21px;background:#fff;border:2px solid #111"></div>
<div class="a" style="left:71px;top:925px;width:20px;height:21px;background:linear-gradient(90deg,#111,#eee);border:2px solid #111"></div>
<div class="a" style="left:97px;top:921px;width:27px;height:29px;background:#3f3f3f"></div>
<div class="a" style="left:100px;top:925px;width:20px;height:21px;background:#fff;border:2px solid #111;overflow:hidden"></div>
<svg class="a" style="left:100px;top:925px" width="20" height="21"><path d="M1 20 L19 1" stroke="#e2141f" stroke-width="3"/></svg>
<div class="a" style="left:39px;top:957px;width:26px;height:26px;background:#3e3e3e"></div>
<svg class="a" style="left:40px;top:958px" width="90" height="26"><g fill="#aaa" stroke="#ddd" stroke-width="1.2"><circle cx="11" cy="12" r="6"/><rect x="12" y="12" width="8" height="8"/><circle cx="41" cy="12" r="6" fill="#888"/><rect x="42" y="12" width="8" height="8" fill="#888"/></g><circle cx="71" cy="13" r="6" fill="#5a5a5a" stroke="#666"/></svg>
<svg class="a" style="left:64px;top:996px" width="36" height="26"><rect x="14" y="1" width="20" height="15" fill="#777" stroke="#ccc" stroke-width="2"/><rect x="2" y="9" width="20" height="15" fill="#777" stroke="#ccc" stroke-width="2"/></svg>
<svg class="a" style="left:70px;top:1052px" width="26" height="8"><circle cx="4" cy="4" r="3" fill="#ccc"/><circle cx="13" cy="4" r="3" fill="#ccc"/><circle cx="22" cy="4" r="3" fill="#ccc"/></svg>

<!-- RIGHT DOCK -->
<div class="a" style="left:1860px;top:139px;width:431px;height:18px;background:#434343"></div>
<svg class="a" style="left:1899px;top:143px" width="12" height="10"><path d="M5 1 L1 5 L5 9 Z M10 1 L6 5 L10 9 Z" fill="#d0d0d0"/></svg>
<svg class="a" style="left:2271px;top:143px" width="12" height="10"><path d="M1 1 L5 5 L1 9 Z M6 1 L10 5 L6 9 Z" fill="#d0d0d0"/></svg>
<div class="a" style="left:1858px;top:157px;width:4px;height:1088px;background:#3f3f3f"></div>
<div class="a" style="left:1862px;top:157px;width:57px;height:1088px;background:#545454"></div>
<div class="a" style="left:1918px;top:157px;width:3px;height:1088px;background:#444"></div>
<!-- icon strip -->
<svg class="a" style="left:1862px;top:157px" width="58" height="780">
<g fill="#4a4a4a">
<rect x="3" y="100" width="52" height="2"/><rect x="3" y="241" width="52" height="2"/><rect x="3" y="386" width="52" height="2"/><rect x="3" y="487" width="52" height="2"/><rect x="3" y="631" width="52" height="2"/><rect x="3" y="691" width="52" height="2"/><rect x="3" y="751" width="52" height="2"/>
</g>
<g fill="#454545">
<path d="M17 6h2v4h-2zM21 6h2v4h-2zM25 6h2v4h-2zM29 6h2v4h-2zM33 6h2v4h-2zM37 6h2v4h-2z"/>
<path d="M17 108h2v4h-2zM21 108h2v4h-2zM25 108h2v4h-2zM29 108h2v4h-2zM33 108h2v4h-2zM37 108h2v4h-2z"/>
<path d="M17 249h2v4h-2zM21 249h2v4h-2zM25 249h2v4h-2zM29 249h2v4h-2zM33 249h2v4h-2zM37 249h2v4h-2z"/>
<path d="M17 393h2v4h-2zM21 393h2v4h-2zM25 393h2v4h-2zM29 393h2v4h-2zM33 393h2v4h-2zM37 393h2v4h-2z"/>
<path d="M17 496h2v4h-2zM21 496h2v4h-2zM25 496h2v4h-2zM29 496h2v4h-2zM33 496h2v4h-2zM37 496h2v4h-2z"/>
<path d="M17 638h2v4h-2zM21 638h2v4h-2zM25 638h2v4h-2zM29 638h2v4h-2zM33 638h2v4h-2zM37 638h2v4h-2z"/>
<path d="M17 698h2v4h-2zM21 698h2v4h-2zM25 698h2v4h-2zM29 698h2v4h-2zM33 698h2v4h-2zM37 698h2v4h-2z"/>
</g>
<!-- palette y=190 -->
<g transform="translate(28,33)" fill="#d8d8d8"><path d="M-13 2 C-14 -8 -2 -11 6 -9 C13 -7 16 -2 13 3 C10 8 4 4 2 8 C0 11 -12 10 -13 2 Z"/><g fill="#545454"><circle cx="-8" cy="4" r="2.2"/><circle cx="-3" cy="6" r="2.2"/><circle cx="2" cy="5" r="2" /><circle cx="8" cy="-3" r="2"/></g></g>
<!-- gradient quarter y=233 -->
<defs><linearGradient id="qg" x1="0" y1="0" x2="1" y2="1"><stop offset="0" stop-color="#222"/><stop offset="1" stop-color="#eee"/></linearGradient><linearGradient id="hg" x1="0" x2="1"><stop offset="0" stop-color="#222"/><stop offset="1" stop-color="#eee"/></linearGradient></defs>
<path d="M17 66 V87 H38 C38 75 30 66 17 66 Z" fill="url(#qg)" stroke="#ddd" stroke-width="1.5"/>
<!-- swatches y=295 -->
<g transform="translate(18,130)"><rect width="22" height="16" fill="#999" stroke="#ccc" stroke-width="1.5"/><rect x="2" y="2" width="5" height="5" fill="#666"/><rect x="15" y="2" width="5" height="5" fill="#666"/><rect x="8" y="9" width="6" height="5" fill="#777"/><path d="M0 8 H22 M11 0 V16" stroke="#ccc" stroke-width="1"/></g>
<!-- brushes y=335 -->
<g transform="translate(28,178)" fill="#d8d8d8"><rect x="-7" y="2" width="14" height="10"/><path d="M-2 2 L-8 -10 M0 2 L0 -14 M2 2 L8 -8" stroke="#d8d8d8" stroke-width="2"/><ellipse cx="-8" cy="-9" rx="3" ry="5"/><ellipse cx="0" cy="-13" rx="3" ry="4"/><ellipse cx="9" cy="-8" rx="4" ry="3"/></g>
<!-- club y=376 -->
<g transform="translate(28,219)" fill="#d8d8d8"><circle cx="0" cy="-6" r="5.5"/><circle cx="-6" cy="2" r="5.5"/><circle cx="6" cy="2" r="5.5"/><path d="M-2 2 L-4 11 H4 L2 2 Z"/><rect x="-8" y="10" width="16" height="2"/></g>
<!-- stroke lines y=436 -->
<g fill="#e0e0e0"><rect x="16" y="271" width="24" height="3"/><rect x="16" y="278" width="24" height="3"/><rect x="16" y="285" width="24" height="3"/></g>
<!-- gradient rect y=477 -->
<rect x="17" y="312" width="23" height="16" fill="url(#hg)" stroke="#ddd" stroke-width="1.5"/>
<!-- transparency selected y=519 -->
<rect x="9" y="346" width="39" height="31" fill="#383838"/>
<circle cx="24" cy="359" r="8.5" fill="#c8c8c8"/><circle cx="31" cy="365" r="8.5" fill="#8a8a8a" stroke="#bbb" stroke-width="1"/>
<!-- appearance y=580 -->
<circle cx="28" cy="423" r="9" fill="#d8d8d8"/><circle cx="28" cy="423" r="11.5" fill="none" stroke="#aaa" stroke-width="1.2" stroke-dasharray="2 2"/>
<!-- symbols y=621 -->
<rect x="22" y="454" width="17" height="15" fill="none" stroke="#d8d8d8" stroke-width="1.8"/><rect x="16" y="462" width="8" height="8" fill="none" stroke="#d8d8d8" stroke-width="1.8"/><circle cx="23" cy="469" r="4" fill="none" stroke="#d8d8d8" stroke-width="1.6"/>
<!-- layers y=681 -->
<path d="M28 513 L40 520 L28 527 L16 520 Z" fill="#e0e0e0"/><path d="M16 525 L28 532 L40 525" fill="none" stroke="#e0e0e0" stroke-width="3"/>
<!-- export y=722 -->
<path d="M26 555 H17 V575 H37 V566" fill="none" stroke="#e0e0e0" stroke-width="2.4"/><path d="M26 566 L38 554 M31 553 H39 V561" fill="none" stroke="#e0e0e0" stroke-width="2.2"/>
<!-- artboards y=762 -->
<rect x="16" y="594" width="15" height="16" fill="none" stroke="#e0e0e0" stroke-width="2"/><rect x="22" y="600" width="18" height="14" fill="#545454" stroke="#e0e0e0" stroke-width="2"/>
<!-- A| y=824 -->
<text x="16" y="675" font-family="Liberation Sans" font-size="25" fill="#e0e0e0">A</text><rect x="36" y="654" width="1.8" height="24" fill="#e0e0e0"/>
<!-- pilcrow y=886 -->
<path d="M27 717 H38 V741 H35 V720 H32 V741 H29 V730 C22 730 19 727 19 723 C19 719 22 717 27 717 Z" fill="#e0e0e0"/>
</svg>

<!-- PROPERTIES PANEL -->
<div class="a" style="left:1921px;top:157px;width:370px;height:40px;background:#474747"></div>
<div class="a" style="left:1922px;top:157px;width:96px;height:40px;background:#535353"></div>
<div class="t" style="left:1935px;top:170px;font-size:14.2px;font-weight:700;color:#f0f0f0">Properties</div>
<div class="t" style="left:2033px;top:170px;font-size:14.2px;color:#aaa">Libraries</div>
<svg class="a" style="left:2266px;top:171px" width="17" height="13"><g fill="#ccc"><rect y="0" width="16" height="2"/><rect y="5" width="16" height="2"/><rect y="10" width="16" height="2"/></g></svg>
<div class="a" style="left:2274px;top:197px;width:16px;height:1048px;background:#4c4c4c"></div>
<div class="a" style="left:2274px;top:210px;width:17px;height:893px;background:#5b5b5b;border-radius:7px"></div>
<svg class="a" style="left:2275px;top:201px" width="13" height="8"><path d="M1 7 L6.5 2 L12 7" fill="none" stroke="#999" stroke-width="1.5"/></svg>
<div class="t" style="left:1936px;top:216px;font-size:14px;color:#e2e2e2">No Selection</div>
<div class="a" style="left:1930px;top:242px;width:340px;height:2px;background:#4c4c4c"></div>
<svg class="a" style="left:1943px;top:272px" width="14" height="9"><path d="M1 1 L7 7 L13 1" fill="none" stroke="#ddd" stroke-width="2.2"/></svg>
<div class="t" style="left:1971px;top:269px;font-size:14.7px;color:#dcdcdc">Text to Vector Graphic (Beta)</div>
<div class="t" style="left:1936px;top:310px;font-size:14px;color:#d0d0d0">Type</div>
<div class="a" style="left:1937px;top:337px;width:324px;height:38px;background:#474747"></div>
<svg class="a" style="left:1941px;top:344px" width="26" height="24"><g fill="#dcdcdc" transform="translate(13,12)"><path d="M0 0 C-3 -6 -3 -11 2 -11 C5 -8 3 -3 0 0Z"/><path d="M0 0 C6 -3 11 -3 11 2 C8 5 3 3 0 0Z"/><path d="M0 0 C3 6 3 11 -2 11 C-5 8 -3 3 0 0Z"/><path d="M0 0 C-6 3 -11 3 -11 -2 C-8 -5 -3 -3 0 0Z"/></g></svg>
<div class="t" style="left:1980px;top:349px;font-size:14.5px;font-weight:700;color:#f0f0f0">Subject</div>
<svg class="a" style="left:2242px;top:351px" width="14" height="9"><path d="M1 1 L7 7 L13 1" fill="none" stroke="#ddd" stroke-width="2.2"/></svg>
<div class="a" style="left:1940px;top:400px;width:38px;height:20px;background:#f0f0f0;border-radius:10px"></div>
<div class="a" style="left:1960px;top:403px;width:14px;height:14px;background:#7a7a7a;border-radius:50%"></div>
<div class="t" style="left:1995px;top:402px;font-size:14.5px;color:#dcdcdc">Match active artboard style</div>
<div class="t" style="left:1936px;top:444px;font-size:14px;color:#d0d0d0">Prompt</div>
<div class="a" style="left:1937px;top:472px;width:324px;height:58px;background:#474747"></div>
<div class="t" style="left:1945px;top:475px;font-size:14.8px;color:#e8e8e8;line-height:19px">Describe the vector graphic you want to<br>generate</div>
<svg class="a" style="left:1940px;top:540px" width="140" height="36">
<circle cx="18" cy="21" r="8.5" fill="none" stroke="#d8d8d8" stroke-width="1.8"/><path d="M9.5 21 A8.5 8.5 0 0 0 26.5 21 Z" fill="#d8d8d8"/><path d="M4 8 L18 21" stroke="#d8d8d8" stroke-width="4" stroke-linecap="round"/><path d="M6 10 L16 19" stroke="#888" stroke-width="1.5"/>
<g transform="translate(62,19)" fill="none" stroke="#d8d8d8" stroke-width="2"><path d="M-5 5 C-9 0 -7 -8 0 -8 C7 -8 9 0 5 5 V8 H-5 Z"/><path d="M-4 12 H4"/><path d="M0 -14 V-12 M-10 -8 L-8 -6 M10 -8 L8 -6 M-13 0 H-11 M13 0 H11"/></g>
<g transform="translate(107,19)"><circle r="8" fill="#d8d8d8"/><circle r="3" fill="#535353"/><g stroke="#d8d8d8" stroke-width="4"><path d="M0 -12 V12 M-12 0 H12 M-8.5 -8.5 L8.5 8.5 M8.5 -8.5 L-8.5 8.5"/></g><circle r="3.5" fill="#535353"/></g>
</svg>
<div class="a" style="left:2099px;top:541px;width:163px;height:39px;background:#575757;border-radius:3px"></div>
<svg class="a" style="left:2116px;top:549px" width="24" height="24"><path d="M10 4 H2 V22 H20 V14" fill="none" stroke="#6c6c6c" stroke-width="2"/><path d="M9 13 H13 M11 11 V15" stroke="#6c6c6c" stroke-width="2"/><path d="M17 2 L19 6 L23 7 L19 8 L17 12 L15 8 L11 7 L15 6 Z" fill="#6c6c6c"/></svg>
<div class="t" style="left:2145px;top:553px;font-size:14px;color:#6c6c6c">Generate (Beta)</div>
<div class="t" style="left:1936px;top:599px;font-size:14px;color:#d8d8d8">Sample Prompts</div>
<svg class="a" style="left:1935px;top:620px" width="320" height="100" viewBox="0 0 320 100">
<!-- skull -->
<g stroke="#141414" stroke-width="2.2" fill="none" stroke-linecap="round">
<path d="M36 33 L29 22 M32 27 L26 24 M33 28 L35 19 M58 33 L64 20 M62 26 L70 22 M66 34 L73 27"/>
<path d="M30 64 L19 72 M27 68 L22 76 M33 70 L30 77 M22 58 L14 54 M66 64 L78 72 M70 68 L74 77 M75 58 L83 54 M68 60 L80 63"/>
</g>
<ellipse cx="24" cy="53" rx="7.5" ry="8" fill="#3a1620"/>
<ellipse cx="71" cy="49" rx="8" ry="10" fill="#2c1218"/>
<path d="M48.5 22.5 C35 22.5 27.5 32 28 45 C28.3 53 31 58 35 62 L35.5 80 C40 83.5 57 83.5 62 80 L62.5 62 C66.5 58 69 52 69 45 C69 32 61.5 22.5 48.5 22.5 Z" fill="#f4f4f4"/>
<path d="M40 30 L45 38 L43 46 M55 27 L51 34 L57 41 M48 40 L50 46" stroke="#9a9a9a" stroke-width="0.7" fill="none"/>
<path d="M30.5 50 C31 45 38 44 43.5 47 C45 51 43 57 38 58 C33 58 30 55 30.5 50 Z" fill="#1a0a0e"/>
<path d="M66.5 50 C66 45 59 44 53.5 47 C52 51 54 57 59 58 C64 58 67 55 66.5 50 Z" fill="#1a0a0e"/>
<ellipse cx="38" cy="53" rx="3.5" ry="2.6" fill="#c43a64"/><ellipse cx="59" cy="53" rx="3.5" ry="2.6" fill="#c43a64"/>
<path d="M48.5 53 C45 56 44 62 46 64.5 L48.5 63 L51 64.5 C53 62 52 56 48.5 53 Z" fill="#111"/>
<path d="M38 71 C44 70 53 70 59 71 M40 68 V76 M44 69 V78 M48.5 69 V78 M53 69 V78 M57 68 V76" stroke="#b0b0b0" stroke-width="0.7" fill="none"/>
<!-- dragon -->
<path d="M128 44 C124 52 128 66 136 72 C138 64 142 58 148 56 C140 54 132 50 128 44 Z" fill="#f0cc30"/>
<path d="M190 40 C194 50 190 64 182 70 C180 62 176 56 170 54 C178 52 186 48 190 40 Z" fill="#f0cc30"/>
<path d="M131 56 L147 58 L146 76 L136 72 Z" fill="#ec8456"/>
<path d="M187 52 L171 56 L172 74 L182 68 Z" fill="#ec8456"/>
<path d="M134 72 C132 80 138 86 144 84 L143 78 C140 79 137 77 137 72 Z" fill="#f0cc30"/>
<path d="M142 56 C140 70 141 86 146 91 L172 91 C177 86 178 70 176 56 Z" fill="#9ccb8c"/>
<path d="M152 55 C150 68 151 84 155 89 L164 89 C168 84 169 68 166 55 Z" fill="#f2dcae"/>
<path d="M141 27 C139 21 141 16 144 15 C143 19 145 23 146 26 Z M177 27 C179 21 177 16 174 15 C175 19 173 23 172 26 Z M140 37 L134 31 L137 39 Z M178 37 L184 31 L181 39 Z" fill="#ece2e2"/>
<ellipse cx="159" cy="39" rx="19" ry="15.5" fill="#a2d092"/>
<path d="M157 26 C153 20 156 13 158 10 C159 14 164 17 164 22 C164 25 161 27 157 26 Z" fill="#f29a2e"/>
<ellipse cx="148" cy="37.5" rx="3.6" ry="4.6" fill="#5a2a14"/><ellipse cx="169" cy="37.5" rx="3.6" ry="4.6" fill="#5a2a14"/>
<circle cx="147" cy="36" r="1.1" fill="#fff"/><circle cx="168" cy="36" r="1.1" fill="#fff"/>
<path d="M150 46 C154 50 164 50 168 46" stroke="#3a5a2a" stroke-width="1.3" fill="none"/>
<path d="M142 86 L146 92 L151 92 L150 86 Z M176 86 L172 92 L168 92 L168 86 Z" fill="#9ccb8c"/>
<!-- burger -->
<path d="M235 45 C235 30 250 23 266 23 C282 23 297 30 297 45 Z" fill="#f0a830"/>
<g fill="#ffe090"><circle cx="254" cy="30" r="0.8"/><circle cx="262" cy="27" r="0.8"/><circle cx="272" cy="31" r="0.8"/><circle cx="281" cy="28" r="0.8"/><circle cx="290" cy="35" r="0.8"/><circle cx="246" cy="36" r="0.8"/></g>
<rect x="231" y="44" width="70" height="7" rx="3.5" fill="#44a040"/>
<rect x="241" y="43" width="50" height="5" fill="#d84030"/>
<rect x="234" y="51" width="64" height="10" rx="4" fill="#8a4a20"/>
<path d="M236 51 H296 L282 54 L268 52 L252 54 Z" fill="#f0d060"/>
<rect x="232" y="60" width="68" height="7" rx="3.5" fill="#3aa040"/>
<path d="M234 66 H298 C298 74 292 78 266 78 C240 78 234 74 234 66 Z" fill="#f0b030"/>
</svg>

<div class="t" style="left:1937px;top:738px;font-size:11px;color:#d8d8d8">Minimal skull wi...</div>
<div class="t" style="left:2046px;top:738px;font-size:11px;color:#d8d8d8">Cute baby drag...</div>
<div class="t" style="left:2153px;top:738px;font-size:11px;color:#d8d8d8">Big juicy burger...</div>
<svg class="a" style="left:1942px;top:842px" width="26" height="26"><circle cx="12.5" cy="12.5" r="10.5" fill="none" stroke="#d8d8d8" stroke-width="2"/><rect x="11.3" y="10.5" width="2.5" height="8" fill="#d8d8d8"/><circle cx="12.5" cy="7.2" r="1.6" fill="#d8d8d8"/></svg>
<svg class="a" style="left:2234px;top:850px" width="24" height="8"><circle cx="4" cy="4" r="3" fill="#ddd"/><circle cx="12" cy="4" r="3" fill="#ddd"/><circle cx="20" cy="4" r="3" fill="#ddd"/></svg>
<div class="a" style="left:1930px;top:877px;width:340px;height:2px;background:#4c4c4c"></div>
<div class="t" style="left:1936px;top:898px;font-size:14.5px;color:#dcdcdc">Document</div>
<div class="t" style="left:2001px;top:941px;font-size:14.5px;color:#d0d0d0">Units:</div>
<div class="a" style="left:2048px;top:932px;width:169px;height:29px;background:#474747"></div>
<div class="t" style="left:2057px;top:940px;font-size:14.5px;color:#f0f0f0">Points</div>
<svg class="a" style="left:2199px;top:943px" width="13" height="8"><path d="M1 1 L6.5 6.5 L12 1" fill="none" stroke="#ddd" stroke-width="2"/></svg>
<div class="t" style="left:1977px;top:983px;font-size:14.5px;color:#d0d0d0">Artboard:</div>
<div class="a" style="left:2049px;top:976px;width:80px;height:27px;background:#474747"></div>
<div class="a" style="left:2130px;top:976px;width:25px;height:27px;background:#4a4a4a"></div>
<div class="t" style="left:2053px;top:982px;font-size:14.5px;color:#f0f0f0">1</div>
<svg class="a" style="left:2135px;top:986px" width="13" height="8"><path d="M1 1 L6.5 6.5 L12 1" fill="none" stroke="#ddd" stroke-width="2"/></svg>
<svg class="a" style="left:2177px;top:984px" width="40" height="14"><path d="M8 1 L2 7 L8 13 Z M32 1 L38 7 L32 13 Z" fill="#6a6a6a"/></svg>
<div class="btn" style="left:2047px;top:1017px;width:170px;height:30px;border-color:#6c6c6c"></div>
<div class="t" style="left:2085px;top:1025px;font-size:14.5px;color:#ececec">Edit Artboards</div>
<div class="a" style="left:1930px;top:1066px;width:340px;height:2px;background:#4c4c4c"></div>
<div class="t" style="left:1936px;top:1091px;font-size:14.5px;color:#d8d8d8">Ruler &amp; Grids</div>
<svg class="a" style="left:2066px;top:1085px" width="120" height="28">
<path d="M2 2 H26 V7 H7 V26 H2 Z" fill="#d8d8d8"/><path d="M9 4 h2 M13 4 h2 M17 4 h2 M21 4 h2 M4 9 v2 M4 13 v2 M4 17 v2 M4 21 v2" stroke="#777" stroke-width="1"/>
<g fill="none" stroke="#d8d8d8" stroke-width="2"><rect x="46" y="2" width="24" height="23"/><path d="M46 10 H70 M46 17 H70 M54 2 V25 M62 2 V25"/></g>
<rect x="91" y="2" width="24" height="23" fill="#777" stroke="#d8d8d8" stroke-width="2"/><g fill="#999"><rect x="94" y="5" width="5" height="5"/><rect x="104" y="5" width="5" height="5"/><rect x="99" y="10" width="5" height="5"/><rect x="109" y="10" width="4" height="5"/><rect x="94" y="15" width="5" height="5"/><rect x="104" y="15" width="5" height="5"/></g>
</svg>
<div class="a" style="left:1930px;top:1126px;width:340px;height:2px;background:#4c4c4c"></div>
<div class="t" style="left:1936px;top:1148px;font-size:14.5px;color:#d8d8d8">Guides</div>
<div class="a" style="left:2063px;top:1139px;width:32px;height:31px;background:#333"></div>
<div class="a" style="left:2151px;top:1139px;width:32px;height:31px;background:#333"></div>
<svg class="a" style="left:2063px;top:1139px" width="125" height="32">
<path d="M9 3 V29 M14 3 V29 M4 10 H28 M4 20 H28" stroke="#e8e8e8" stroke-width="2"/>
<path d="M53 3 V29 M58 3 V29 M48 10 H72 M48 20 H72" stroke="#d0d0d0" stroke-width="2"/><rect x="62" y="20" width="10" height="9" fill="#d0d0d0"/><path d="M64 20 V16 A3 3 0 0 1 70 16" fill="none" stroke="#d0d0d0" stroke-width="1.6"/>
<path d="M98 4 V29 M93 9 H118" stroke="#e8e8e8" stroke-width="2"/><path d="M104 5 L98 9 L104 13" fill="none" stroke="#e8e8e8" stroke-width="2"/><path d="M113 14 L107 22 H111 L109 29 L116 20 H112 Z" fill="#e8e8e8"/>
</svg>
<div class="a" style="left:1930px;top:1181px;width:340px;height:2px;background:#4c4c4c"></div>
<div class="t" style="left:1936px;top:1206px;font-size:14.5px;color:#d8d8d8">Snap Options</div>
<div class="a" style="left:2063px;top:1197px;width:32px;height:31px;background:#333"></div>
<svg class="a" style="left:2063px;top:1197px" width="125" height="32">
<path d="M9 5 V27" stroke="#e8e8e8" stroke-width="2"/><circle cx="9" cy="16" r="3" fill="#e8e8e8"/><path d="M14 11 H20 A5 5 0 0 1 20 21 H14" fill="none" stroke="#e8e8e8" stroke-width="3"/>
<path d="M53 4 V28 M57 4 V28 M50 8 H60 M50 13 H60 M50 18 H60 M50 23 H60" stroke="#d0d0d0" stroke-width="1.5"/><path d="M60 11 H66 A5 5 0 0 1 66 21 H60" fill="none" stroke="#d0d0d0" stroke-width="3"/>
<g fill="#d0d0d0"><rect x="94" y="6" width="6" height="5"/><rect x="94" y="13" width="6" height="5"/><rect x="94" y="20" width="6" height="5"/></g><path d="M102 11 H108 A5 5 0 0 1 108 21 H102" fill="none" stroke="#d0d0d0" stroke-width="3"/>
</svg>

<!-- TRANSPARENCY PANEL -->
<div class="a" style="left:1520px;top:399px;width:340px;height:199px;background:#535353;box-shadow:0 1px 3px rgba(0,0,0,.35)"></div>
<div class="a" style="left:1520px;top:399px;width:340px;height:6px;background:#3c3c3c"></div>
<div class="a" style="left:1520px;top:405px;width:340px;height:40px;background:#474747"></div>
<div class="a" style="left:1637px;top:405px;width:126px;height:40px;background:#535353"></div>
<div class="t" style="left:1534px;top:418px;font-size:14px;color:#b8b8b8">Stroke</div>
<div class="t" style="left:1592px;top:418px;font-size:14px;color:#b8b8b8;width:43px;overflow:hidden">Gradient</div>
<svg class="a" style="left:1644px;top:417px" width="8" height="14"><path d="M1 5 L4 1 L7 5 M1 9 L4 13 L7 9" fill="none" stroke="#ccc" stroke-width="1.4"/></svg>
<div class="t" style="left:1659px;top:418px;font-size:13.6px;font-weight:700;color:#f0f0f0">Transparency</div>
<svg class="a" style="left:1800px;top:419px" width="56" height="14"><path d="M1 2 L6 7 L1 12 M7 2 L12 7 L7 12" fill="none" stroke="#e0e0e0" stroke-width="1.6"/><rect x="24" y="0" width="1.5" height="14" fill="#aaa"/><g fill="#ddd"><rect x="37" y="2" width="15" height="2"/><rect x="37" y="6" width="15" height="2"/><rect x="37" y="10" width="15" height="2"/></g></svg>
<div class="a" style="left:1531px;top:457px;width:131px;height:25px;background:#474747"></div>
<div class="t" style="left:1538px;top:463px;font-size:14px;color:#f0f0f0">Normal</div>
<svg class="a" style="left:1644px;top:466px" width="13" height="8"><path d="M1 1 L6.5 6.5 L12 1" fill="none" stroke="#e0e0e0" stroke-width="2"/></svg>
<div class="t" style="left:1673px;top:463px;font-size:14px;color:#d0d0d0">Opacity:</div>
<div class="a" style="left:1734px;top:457px;width:72px;height:25px;background:#474747"></div>
<div class="t" style="left:1738px;top:463px;font-size:14px;color:#f0f0f0">100%</div>
<div class="a" style="left:1808px;top:457px;width:24px;height:25px;background:#4c4c4c"></div>
<svg class="a" style="left:1815px;top:463px" width="10" height="13"><path d="M2 1 L8 6.5 L2 12" fill="none" stroke="#e0e0e0" stroke-width="2"/></svg>
<div class="a" style="left:1530px;top:492px;width:320px;height:1px;background:#4a4a4a"></div>
<div class="a" style="left:1533px;top:507px;width:195px;height:81px;background:#515151;border:1px solid #4c4c4c"></div>
<div class="a" style="left:1734px;top:502px;width:102px;height:28px;background:#575757;border-radius:2px"></div>
<div class="t" style="left:1755px;top:510px;font-size:12.5px;color:#6a6a6a">Make Mask</div>
<div class="a" style="left:1735px;top:541px;width:17px;height:17px;border:1.5px solid #666"></div>
<div class="t" style="left:1759px;top:543px;font-size:12.5px;color:#6a6a6a">Clip</div>
<div class="a" style="left:1735px;top:571px;width:17px;height:16px;border:1.5px solid #666"></div>
<div class="t" style="left:1759px;top:573px;font-size:12.5px;color:#6a6a6a">Invert Mask</div>
<!-- scrollbar arrow & cursor -->
<svg class="a" style="left:1841px;top:189px" width="14" height="9"><path d="M1 8 L7 2 L13 8" fill="none" stroke="#999" stroke-width="1.6"/></svg>
<div class="a" style="left:1838px;top:690px;width:20px;height:30px;background:#5a5a5a;border-radius:10px"></div>
<svg class="a" style="left:1955px;top:534px" width="16" height="24"><path d="M1 1 L1 18 L5 14 L8.5 21 L11 20 L7.5 13 L13 13 Z" fill="#fff" stroke="#222" stroke-width="1.2"/></svg>

</body></html>
